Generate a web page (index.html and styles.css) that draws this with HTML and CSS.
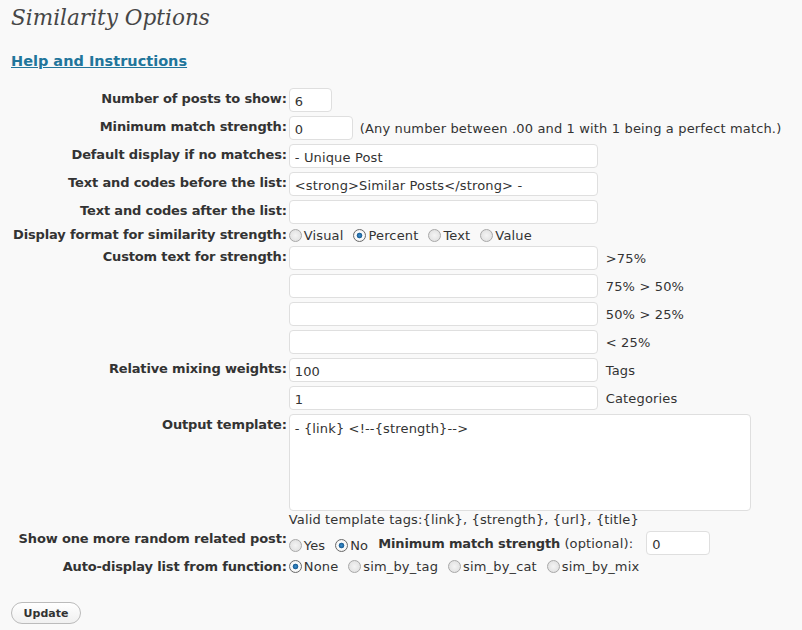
FILE: index.html
```html
<!DOCTYPE html>
<html>
<head>
<meta charset="utf-8">
<link rel="stylesheet" href="styles.css">
</head>
<body>
<div class="wrap">
  <h2 class="title">Similarity Options</h2>
  <h3 class="help"><a href="#">Help and Instructions</a></h3>
  <div class="form">
    <label class="lbl">Number of posts to show:</label>
    <div class="fld"><input class="inp w42" type="text" value="6"></div>

    <label class="lbl">Minimum match strength:</label>
    <div class="fld"><input class="inp w63" type="text" value="0"><span class="note">(Any number between .00 and 1 with 1 being a perfect match.)</span></div>

    <label class="lbl">Default display if no matches:</label>
    <div class="fld"><input class="inp wide" type="text" value="- Unique Post"></div>

    <label class="lbl">Text and codes before the list:</label>
    <div class="fld"><input class="inp wide" type="text" value="<strong>Similar Posts</strong> -"></div>

    <label class="lbl">Text and codes after the list:</label>
    <div class="fld"><input class="inp wide" type="text" value=""></div>

    <label class="lbl lbl-radio">Display format for similarity strength:</label>
    <div class="fld radios">
      <span class="opt"><span class="rb"></span>Visual</span>
      <span class="opt"><span class="rb on"></span>Percent</span>
      <span class="opt"><span class="rb"></span>Text</span>
      <span class="opt"><span class="rb"></span>Value</span>
    </div>

    <label class="lbl">Custom text for strength:</label>
    <div class="fld stack">
      <div class="line"><input class="inp wide" type="text" value=""><span class="side">&gt;75%</span></div>
      <div class="line"><input class="inp wide" type="text" value=""><span class="side">75% &gt; 50%</span></div>
      <div class="line"><input class="inp wide" type="text" value=""><span class="side">50% &gt; 25%</span></div>
      <div class="line"><input class="inp wide" type="text" value=""><span class="side">&lt; 25%</span></div>
    </div>

    <label class="lbl">Relative mixing weights:</label>
    <div class="fld stack">
      <div class="line"><input class="inp wide" type="text" value="100"><span class="side">Tags</span></div>
      <div class="line"><input class="inp wide" type="text" value="1"><span class="side">Categories</span></div>
    </div>

    <label class="lbl">Output template:</label>
    <div class="fld">
      <textarea class="ta">- {link} &lt;!--{strength}--&gt;</textarea>
      <div class="tags">Valid template tags:{link}, {strength}, {url}, {title}</div>
    </div>

    <label class="lbl lbl-rand">Show one more random related post:</label>
    <div class="fld radios rand">
      <span class="opt"><span class="rb"></span>Yes</span>
      <span class="opt"><span class="rb on"></span>No</span>
      <span class="opt2"><b>Minimum match strength</b> (optional):</span>
      <input class="inp w63" type="text" value="0">
    </div>

    <label class="lbl lbl-auto">Auto-display list from function:</label>
    <div class="fld radios auto">
      <span class="opt"><span class="rb on"></span>None</span>
      <span class="opt"><span class="rb"></span>sim_by_tag</span>
      <span class="opt"><span class="rb"></span>sim_by_cat</span>
      <span class="opt"><span class="rb"></span>sim_by_mix</span>
    </div>
  </div>
  <div class="submit"><button class="btn" type="button">Update</button></div>
</div>
</body>
</html>
```

FILE: styles.css
```css
html, body {
  margin: 0;
  padding: 0;
  background: #f9f9f9;
}
body {
  font-family: "DejaVu Sans", Verdana, sans-serif;
  font-size: 13px;
  letter-spacing: 0.15px;
  color: #333;
}
.wrap {
  padding: 0 11px;
}
.title {
  margin: 0;
  padding: 4px 0 0;
  font-family: "DejaVu Serif", Georgia, serif;
  font-style: italic;
  font-weight: normal;
  font-size: 21.6px;
  letter-spacing: 0;
  line-height: 28px;
  color: #464646;
}
.help {
  margin: 20px 0 0;
  font-size: 14.5px;
  letter-spacing: 0;
  line-height: 18px;
  font-weight: bold;
}
.help a {
  color: #21759b;
  text-decoration: underline;
}
.form {
  display: grid;
  grid-template-columns: auto 1fr;
  column-gap: 2px;
  row-gap: 4px;
  margin-top: 18px;
  margin-left: 2px;
}
.lbl {
  text-align: right;
  font-weight: bold;
  letter-spacing: -0.15px;
  padding-top: 3px;
  line-height: 15px;
  white-space: nowrap;
}
.lbl-radio { padding-top: 0; line-height: 14px; }
.fld {
  display: flex;
  flex-direction: column;
  align-items: flex-start;
}
.fld:has(.note) {
  flex-direction: row;
  align-items: center;
}
.inp {
  box-sizing: border-box;
  height: 24px;
  border: 1px solid #dfdfdf;
  border-radius: 4px;
  background: #fff;
  font-family: "DejaVu Sans", Verdana, sans-serif;
  font-size: 13px;
  letter-spacing: 0.15px;
  color: #333;
  padding: 2px 5px 0;
  margin: 0;
}
.w42 { width: 43px; }
.w63 { width: 64px; }
.wide { width: 309px; }
.note {
  margin-left: 7px;
  white-space: nowrap;
}
.radios {
  flex-direction: row;
  align-items: center;
  height: 14px;
}
.opt {
  display: inline-flex;
  align-items: center;
  margin-right: 10px;
  white-space: nowrap;
}
.rb {
  display: inline-block;
  box-sizing: border-box;
  width: 13px;
  height: 13px;
  border: 1px solid #a8a8a8;
  border-radius: 50%;
  background: radial-gradient(circle at 50% 50%, #f4f4f4, #dcdcdc);
  margin-right: 2px;
}
.rb.on {
  background: radial-gradient(circle, #3a8fd0 0, #1d5f94 2.5px, #fff 3.2px, #eee 6px);
  border-color: #6a6a6a;
}
.stack {
  gap: 4px;
}
.line {
  display: flex;
  align-items: center;
}
.side {
  margin-left: 8px;
  padding-top: 1px;
}
.ta {
  box-sizing: border-box;
  width: 462px;
  height: 97px;
  border: 1px solid #dfdfdf;
  border-radius: 4px;
  background: #fff;
  font-family: "DejaVu Sans", Verdana, sans-serif;
  font-size: 13px;
  letter-spacing: 0.15px;
  color: #333;
  padding: 6px 5px;
  margin: 0;
  resize: none;
}
.tags {
  margin-top: 1px;
  white-space: nowrap;
}
.lbl-rand { padding-top: 0; }
.rand {
  height: 24px;
  align-items: center;
}
.rand .opt { padding-top: 4px; }
.opt2 {
  white-space: nowrap;
  margin-right: 13px;
  padding-top: 1px;
}
.opt2 b { letter-spacing: -0.15px; }
.lbl-auto { padding-top: 0; }
.auto { height: 15px; padding-top: 0; }
.submit {
  margin-top: 28px;
}
.btn {
  font-family: "DejaVu Sans", Verdana, sans-serif;
  font-size: 11px;
  font-weight: bold;
  color: #333;
  background: linear-gradient(#fff, #f0f0f0);
  border: 1px solid #bbb;
  border-radius: 11px;
  height: 22px;
  width: 70px;
  padding: 0;
}
```
